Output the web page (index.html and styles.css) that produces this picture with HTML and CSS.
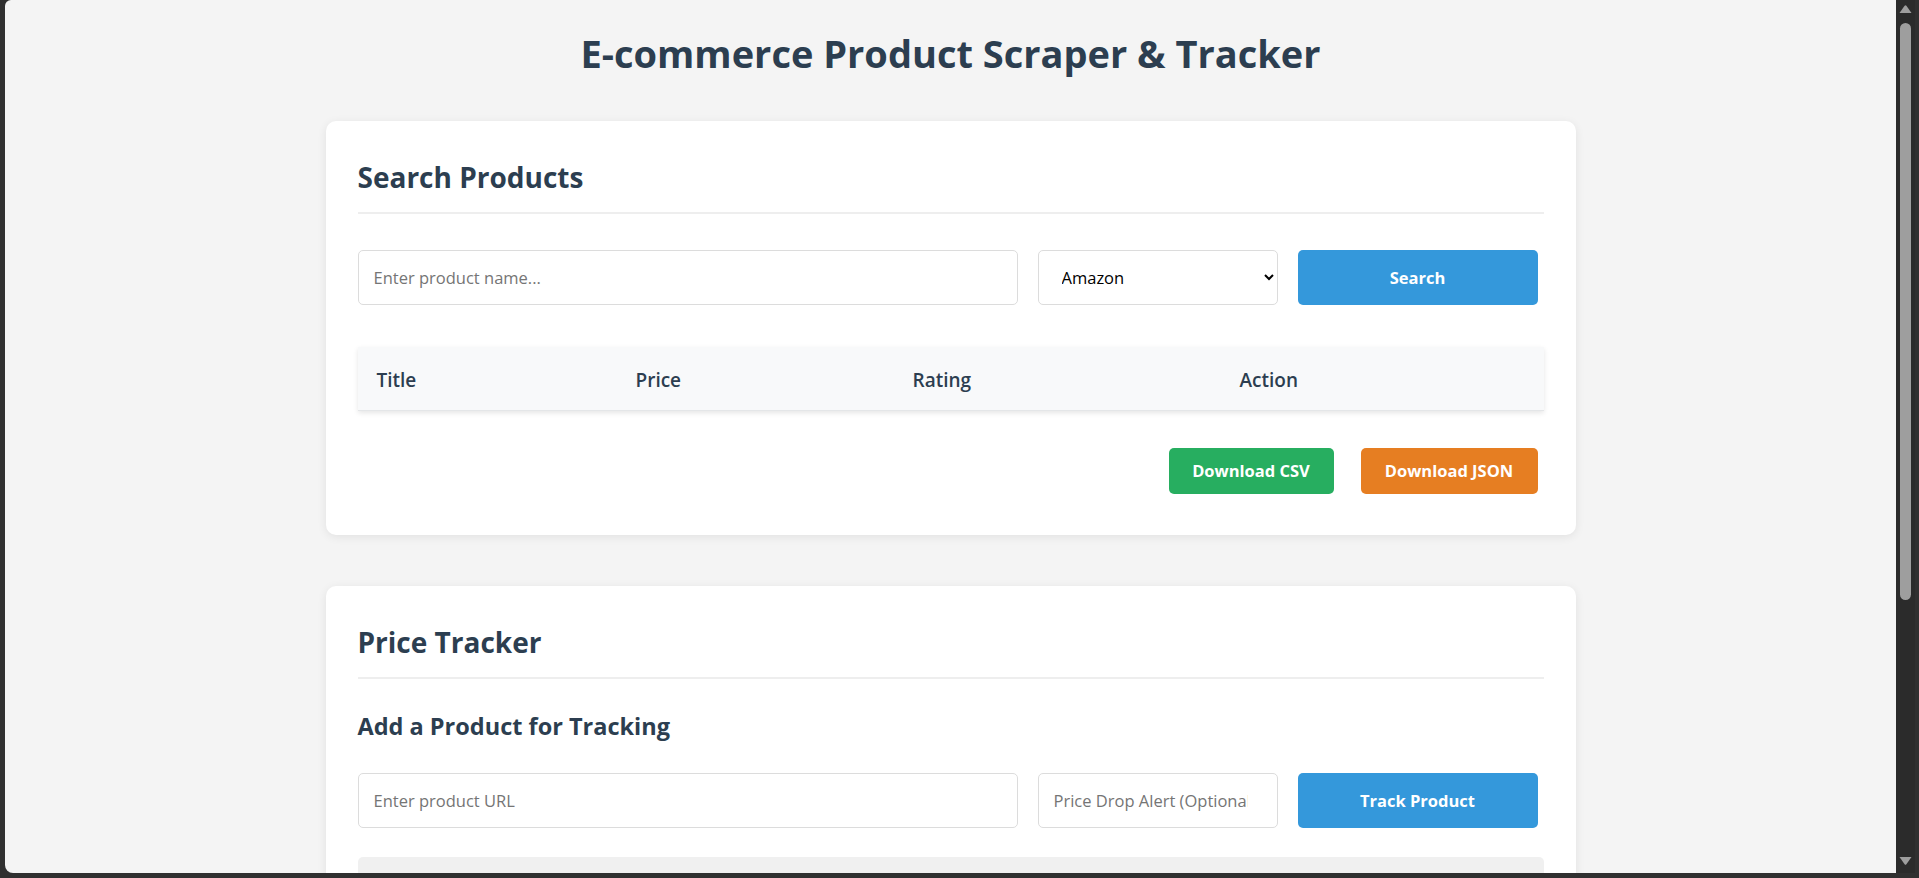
FILE: index.html
```html
<!DOCTYPE html>
<html lang="en">
<head>
<meta charset="utf-8">
<title>E-commerce Product Scraper &amp; Tracker</title>
<link rel="stylesheet" href="styles.css">
</head>
<body>
  <div class="viewport">
    <h1 class="page-title">E-commerce Product Scraper &amp; Tracker</h1>

    <section class="card">
      <h2 class="card-title">Search Products</h2>
      <div class="form-row">
        <input class="field field-grow" type="text" placeholder="Enter product name...">
        <select class="field field-fixed select-field">
          <option>Amazon</option>
          <option>eBay</option>
          <option>Walmart</option>
        </select>
        <button class="btn btn-blue btn-fixed" type="button">Search</button>
      </div>
      <table class="results">
        <thead>
          <tr>
            <th class="col-title">Title</th>
            <th class="col-price">Price</th>
            <th class="col-rating">Rating</th>
            <th class="col-action">Action</th>
          </tr>
        </thead>
        <tbody></tbody>
      </table>
      <div class="actions">
        <button class="btn btn-green btn-csv" type="button">Download CSV</button>
        <button class="btn btn-orange btn-json" type="button">Download JSON</button>
      </div>
    </section>

    <section class="card">
      <h2 class="card-title">Price Tracker</h2>
      <h3 class="sub-title">Add a Product for Tracking</h3>
      <div class="form-row form-row-tight">
        <input class="field field-grow" type="text" placeholder="Enter product URL">
        <input class="field field-fixed field-number" type="number" placeholder="Price Drop Alert (Optional)">
        <button class="btn btn-blue btn-fixed" type="button">Track Product</button>
      </div>
      <div class="tracked-list"></div>
    </section>
  </div>

  <div class="scrollbar">
    <svg class="sb-up" width="13" height="8" viewBox="0 0 13 8"><path d="M0.5 8 L5.6 0.8 Q6.5 -0.3 7.4 0.8 L12.5 8 Z" fill="#9e9e9e"/></svg>
    <div class="sb-thumb"></div>
    <div class="sb-space"></div>
    <svg class="sb-down" width="13" height="8" viewBox="0 0 13 8"><path d="M0.5 0 L5.6 7.2 Q6.5 8.3 7.4 7.2 L12.5 0 Z" fill="#9e9e9e"/></svg>
  </div>
</body>
</html>
```

FILE: styles.css
```css
* {
  box-sizing: border-box;
}

html,
body {
  margin: 0;
  height: 100%;
}

body {
  display: flex;
  align-items: flex-start;
  background: #303030;
  overflow: hidden;
  font-family: "Open Sans", "Noto Sans", sans-serif;
}

.viewport {
  flex: none;
  width: 1891px;
  height: 873px;
  margin-left: 5px;
  background: #f4f4f4;
  border-radius: 6px 0 0 8px;
  overflow: hidden;
}

.scrollbar {
  flex: none;
  width: 19px;
  height: 873px;
  background: #2b2b2b;
  display: flex;
  flex-direction: column;
  align-items: center;
}

.sb-up {
  display: block;
  margin-top: 5px;
}

.sb-thumb {
  width: 11px;
  height: 577px;
  margin-top: 10px;
  background: #9e9e9e;
  border-radius: 6px;
}

.sb-space {
  flex: 1;
}

.sb-down {
  display: block;
  margin-bottom: 8px;
}

.page-title {
  margin: 29px 0 0;
  text-align: center;
  font-size: 38px;
  line-height: 48px;
  font-weight: 700;
  color: #2c3e50;
}

.card {
  width: 1250px;
  margin: 44px auto 0;
  padding: 37px 32px 41px;
  background: #ffffff;
  border-radius: 10px;
  box-shadow: 0 2px 10px rgba(0, 0, 0, 0.08);
}

.card + .card {
  margin-top: 51px;
}

.card-title {
  margin: 0;
  padding-bottom: 16px;
  border-bottom: 2px solid #eeeeee;
  font-size: 28px;
  line-height: 38px;
  font-weight: 700;
  color: #2c3e50;
}

.sub-title {
  margin: 32px 0 0;
  font-size: 23.5px;
  line-height: 30px;
  font-weight: 700;
  color: #2c3e50;
}

.form-row {
  display: flex;
  gap: 20px;
  height: 55px;
  margin-top: 36px;
  padding-right: 6px;
}

.form-row-tight {
  margin-top: 32px;
}

.field {
  height: 100%;
  margin: 0;
  padding: 0 15px;
  border: 1px solid #dcdcdc;
  border-radius: 5px;
  background: #ffffff;
  font-family: "Open Sans", "Noto Sans", sans-serif;
  font-size: 16.5px;
  color: #000000;
  outline: none;
}

.field::placeholder {
  color: #757575;
}

.field-grow {
  flex: 1;
  min-width: 0;
}

.field-fixed {
  flex: none;
  width: 240px;
}

.field-number {
  padding-right: 14px;
}

.select-field {
  padding-left: 19px;
  padding-right: 8px;
}

.btn {
  margin: 0;
  border: none;
  border-radius: 5px;
  color: #ffffff;
  font-family: "Open Sans", "Noto Sans", sans-serif;
  font-size: 16.5px;
  font-weight: 700;
  cursor: pointer;
}

.btn-fixed {
  flex: none;
  width: 240px;
  height: 100%;
}

.btn-blue {
  background: #3498db;
}

.btn-green {
  background: #27ae60;
}

.btn-orange {
  background: #e67e22;
}

.results {
  width: 100%;
  margin-top: 42px;
  border-collapse: collapse;
  table-layout: fixed;
  box-shadow: 0 2px 5px rgba(0, 0, 0, 0.1);
}

.results th {
  height: 63px;
  padding: 3px 19px 0;
  text-align: left;
  background: #f8f9fa;
  border-bottom: 1px solid #e4e6e8;
  font-size: 19px;
  font-weight: 600;
  color: #2c3e50;
}

.col-title {
  width: 259px;
}

.col-price {
  width: 277px;
}

.col-rating {
  width: 327px;
}

.col-action {
  width: 323px;
}

.actions {
  display: flex;
  justify-content: flex-end;
  gap: 27px;
  margin-top: 37px;
  padding-right: 6px;
}

.btn-csv,
.btn-json {
  height: 46px;
  padding: 0;
}

.btn-csv {
  width: 165px;
}

.btn-json {
  width: 177px;
}

.tracked-list {
  height: 160px;
  margin-top: 29px;
  background: #f0f0f0;
  border-radius: 5px;
}
```
